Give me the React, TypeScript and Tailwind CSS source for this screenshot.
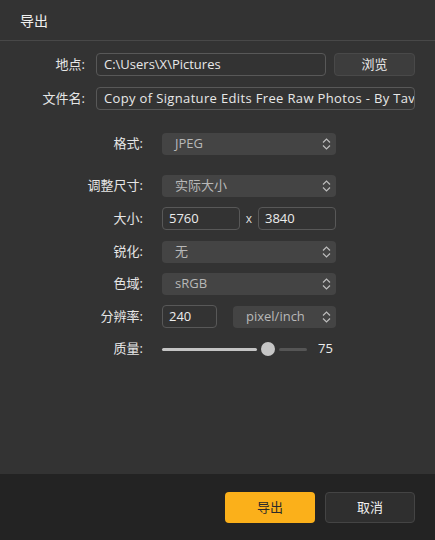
import React from "react";

const font = { fontFamily: '"Open Sans", "Noto Sans CJK SC", sans-serif' };

function Chevrons() {
  return (
    <svg width="9" height="12" viewBox="0 0 9 12" fill="none" stroke="#bdbdbd" strokeWidth="1.2">
      <path d="M1 4.5 L4.5 1 L8 4.5" />
      <path d="M1 7.5 L4.5 11 L8 7.5" />
    </svg>
  );
}

function Select({ value, className = "" }: { value: string; className?: string }) {
  return (
    <div className={`h-[22px] rounded-[4px] bg-[#444444] flex items-center justify-between pl-[13px] pr-[5px] text-[13px] text-[#b8b8b8] ${className}`}>
      <span>{value}</span>
      <Chevrons />
    </div>
  );
}

function Label({ children, w }: { children: React.ReactNode; w: string }) {
  return <div className={`${w} text-right text-[13px] text-[#e6e6e6] shrink-0`}>{children}</div>;
}

export default function App() {
  return (
    <div className="w-[435px] h-[540px] bg-[#333333] flex flex-col" style={font}>
      <div className="h-[41px] border-b border-[#484848] flex items-center px-5 text-[14px] text-[#f0f0f0] shrink-0">
        导出
      </div>
      <div className="flex-1 flex flex-col pt-[12px]">
        <div className="flex items-center h-[23px]">
          <Label w="w-[85px]">地点:</Label>
          <div className="ml-[11px] w-[230px] h-[23px] rounded-[4px] border border-[#585858] flex items-center pl-[7px] text-[13px] text-[#e8e8e8]">
            C:\Users\X\Pictures
          </div>
          <div className="ml-[8px] w-[81px] h-[23px] rounded-[4px] bg-[#3d3d3d] border border-[#494949] flex items-center justify-center text-[13px] text-[#e8e8e8]">
            浏览
          </div>
        </div>
        <div className="flex items-center h-[23px] mt-[11px]">
          <Label w="w-[85px]">文件名:</Label>
          <div className="ml-[11px] w-[319px] h-[23px] rounded-[4px] border border-[#585858] flex items-center pl-[7px] pr-1 text-[13px] tracking-[0.35px] text-[#e8e8e8] overflow-hidden whitespace-nowrap">
            Copy of Signature Edits Free Raw Photos - By Tavis
          </div>
        </div>

        <div className="flex items-center h-[22px] mt-[23px]">
          <Label w="w-[143px]">格式:</Label>
          <Select value="JPEG" className="ml-[19px] w-[174px]" />
        </div>
        <div className="flex items-center h-[22px] mt-[20px]">
          <Label w="w-[143px]">调整尺寸:</Label>
          <Select value="实际大小" className="ml-[19px] w-[174px]" />
        </div>
        <div className="flex items-center h-[23px] mt-[10px]">
          <Label w="w-[143px]">大小:</Label>
          <div className="ml-[19px] w-[78px] h-[23px] rounded-[4px] border border-[#585858] flex items-center pl-[6px] text-[13px] text-[#ececec]">5760</div>
          <div className="w-[18px] text-center text-[12px] text-[#dddddd]">x</div>
          <div className="w-[78px] h-[23px] rounded-[4px] border border-[#585858] flex items-center pl-[6px] text-[13px] text-[#ececec]">3840</div>
        </div>
        <div className="flex items-center h-[22px] mt-[11px]">
          <Label w="w-[143px]">锐化:</Label>
          <Select value="无" className="ml-[19px] w-[174px]" />
        </div>
        <div className="flex items-center h-[22px] mt-[10px]">
          <Label w="w-[143px]">色域:</Label>
          <Select value="sRGB" className="ml-[19px] w-[174px]" />
        </div>
        <div className="flex items-center h-[23px] mt-[10px]">
          <Label w="w-[143px]">分辨率:</Label>
          <div className="ml-[19px] w-[55px] h-[23px] rounded-[4px] border border-[#585858] flex items-center pl-[6px] text-[13px] text-[#ececec]">240</div>
          <Select value="pixel/inch" className="ml-[16px] w-[103px]" />
        </div>
        <div className="flex items-center h-[20px] mt-[11px]">
          <Label w="w-[143px]">质量:</Label>
          <div className="ml-[19px] relative w-[145px] h-[14px] flex items-center">
            <div className="w-[95px] h-[3px] rounded-full bg-[#c4c4c4]" />
            <div className="ml-[22px] w-[28px] h-[3px] rounded-full bg-[#555555]" />
            <div className="absolute left-[99px] top-0 w-[14px] h-[14px] rounded-full bg-[#c6c6c6]" />
          </div>
          <div className="ml-[11px] text-[13px] text-[#ececec]">75</div>
        </div>
      </div>
      <div className="h-[66px] bg-[#232323] flex items-start justify-end gap-[10px] pt-[18px] pr-[20px] shrink-0">
        <div className="w-[90px] h-[31px] rounded-[4px] bg-[#fbb01a] flex items-center justify-center text-[13px] text-[#2a2a2a]">导出</div>
        <div className="w-[90px] h-[31px] rounded-[4px] bg-[#2f2f2f] border border-[#444444] flex items-center justify-center text-[13px] text-[#f0f0f0]">取消</div>
      </div>
    </div>
  );
}
